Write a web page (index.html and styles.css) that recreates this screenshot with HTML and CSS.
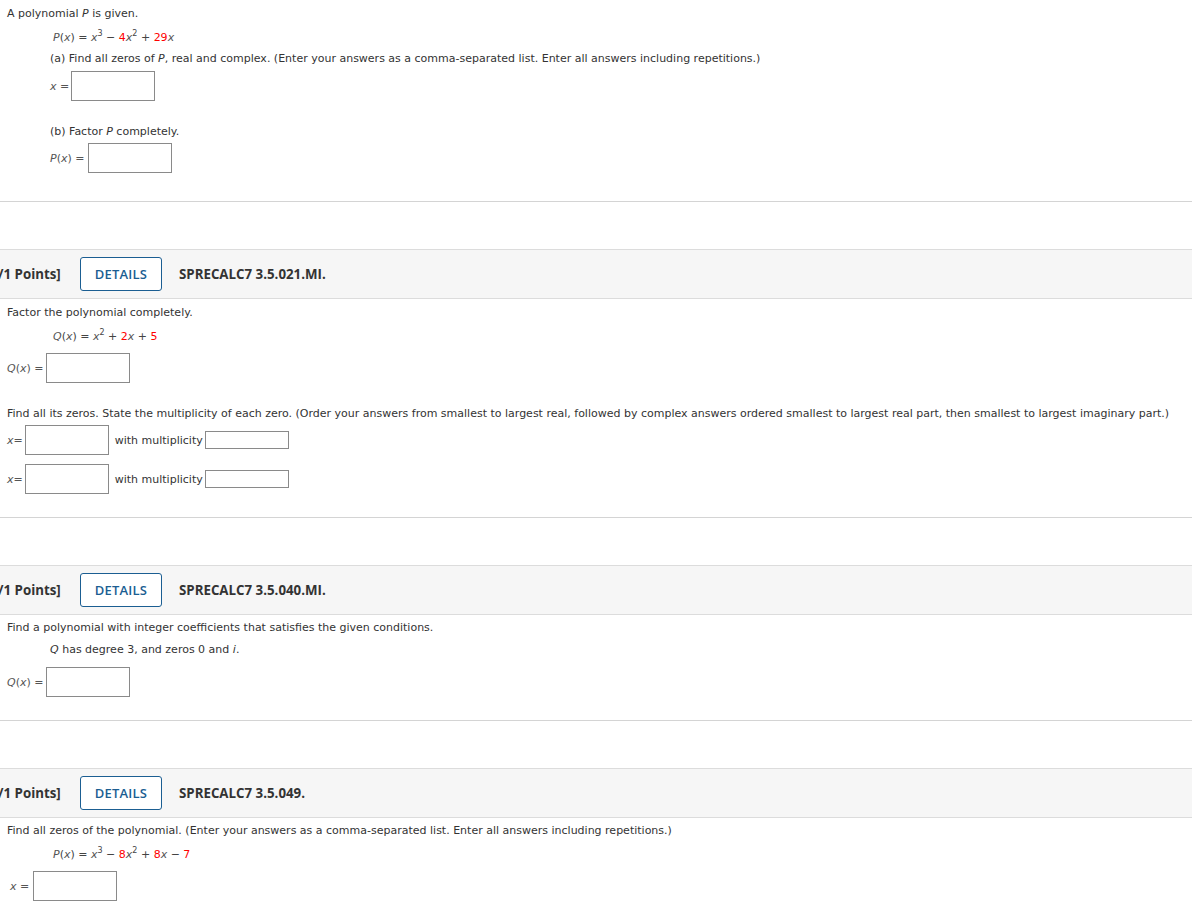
FILE: index.html
```html
<!DOCTYPE html>
<html>
<head>
<meta charset="utf-8">
<link rel="stylesheet" href="styles.css">
</head>
<body>
<div class="q q1">
  <p class="txt t1">A polynomial <i>P</i> is given.</p>
  <div class="indent">
    <p class="math m1"><span class="var">P</span>(<span class="var">x</span>) = <span class="var">x</span><sup>3</sup> &minus; <span class="red">4</span><span class="var">x</span><sup>2</sup> + <span class="red">29</span><span class="var">x</span></p>
    <p class="txt ta">(a) Find all zeros of <i>P</i>, real and complex. (Enter your answers as a comma-separated list. Enter all answers including repetitions.)</p>
    <div class="row ra"><span class="lbl"><span class="var">x</span> =</span><span class="box"></span></div>
    <p class="txt tb">(b) Factor <i>P</i> completely.</p>
    <div class="row rb"><span class="lbl"><span class="var">P</span>(<span class="var">x</span>) =</span><span class="box"></span></div>
  </div>
</div>

<div class="bar">
  <span class="pts">/1 Points]</span>
  <span class="btn">DETAILS</span>
  <span class="code">SPRECALC7 3.5.021.MI.</span>
</div>
<div class="q q2">
  <p class="txt s1">Factor the polynomial completely.</p>
  <p class="math m2"><span class="var">Q</span>(<span class="var">x</span>) = <span class="var">x</span><sup>2</sup> + <span class="red">2</span><span class="var">x</span> + <span class="red">5</span></p>
  <div class="row r2"><span class="lbl"><span class="var">Q</span>(<span class="var">x</span>) =</span><span class="box"></span></div>
  <p class="txt s2">Find all its zeros. State the multiplicity of each zero. (Order your answers from smallest to largest real, followed by complex answers ordered smallest to largest real part, then smallest to largest imaginary part.)</p>
  <div class="row mrow mr1"><span class="lbl"><span class="var">x</span>=</span><span class="box"></span><span class="with">with multiplicity</span><span class="sbox"></span></div>
  <div class="row mrow mr2"><span class="lbl"><span class="var">x</span>=</span><span class="box"></span><span class="with">with multiplicity</span><span class="sbox"></span></div>
</div>

<div class="bar">
  <span class="pts">/1 Points]</span>
  <span class="btn">DETAILS</span>
  <span class="code">SPRECALC7 3.5.040.MI.</span>
</div>
<div class="q q3">
  <p class="txt s1">Find a polynomial with integer coefficients that satisfies the given conditions.</p>
  <p class="txt cond"><i>Q</i> has degree 3, and zeros 0 and <i>i</i>.</p>
  <div class="row r3"><span class="lbl"><span class="var">Q</span>(<span class="var">x</span>) =</span><span class="box"></span></div>
</div>

<div class="bar">
  <span class="pts">/1 Points]</span>
  <span class="btn">DETAILS</span>
  <span class="code">SPRECALC7 3.5.049.</span>
</div>
<div class="q q4">
  <p class="txt s1">Find all zeros of the polynomial. (Enter your answers as a comma-separated list. Enter all answers including repetitions.)</p>
  <p class="math m4"><span class="var">P</span>(<span class="var">x</span>) = <span class="var">x</span><sup>3</sup> &minus; <span class="red">8</span><span class="var">x</span><sup>2</sup> + <span class="red">8</span><span class="var">x</span> &minus; <span class="red">7</span></p>
  <div class="row r4"><span class="lbl"><span class="var">x</span> =</span><span class="box"></span></div>
</div>
</body>
</html>
```

FILE: styles.css
```css
html, body {
  margin: 0;
  padding: 0;
  background: #fff;
  overflow: hidden;
}
body {
  font-family: "DejaVu Sans", Verdana, sans-serif;
  font-size: 11px;
  color: #333;
  width: 1192px;
  height: 902px;
}
p {
  margin: 0;
  line-height: 14px;
}
.q {
  padding-left: 7px;
  border-bottom: 1px solid #d4d4d4;
}
.indent {
  padding-left: 43px;
}
.txt i {
  font-style: italic;
}
.math {
  color: #444;
  padding-left: 46px;
}
.indent .math {
  padding-left: 3px;
}
.var {
  font-style: italic;
  color: #555;
}
.red {
  color: #f00;
}
sup {
  font-size: 8px;
  line-height: 0;
  vertical-align: 5px;
}
.row {
  display: flex;
  align-items: center;
}
.lbl {
  color: #555;
  margin-right: 2px;
}
.box {
  width: 82px;
  height: 28px;
  border: 1px solid #8a8a8a;
  background: #fff;
}
.sbox {
  width: 82px;
  height: 16px;
  border: 1px solid #8a8a8a;
  background: #fff;
}
.with {
  margin: 0 2px 0 6px;
}

/* section 1 */
.q1 { padding-top: 7px; height: 194px; }
.m1 { margin-top: 10px; }
.ta { margin-top: 7px; }
.ra { margin-top: 5px; }
.tb { margin-top: 24px; }
.rb { margin-top: 4px; }
.rb .lbl { margin-right: 4px; }

/* header bar */
.bar {
  margin-top: 47px;
  height: 48px;
  background: #f6f6f6;
  border-top: 1px solid #dcdcdc;
  border-bottom: 1px solid #dcdcdc;
  display: flex;
  align-items: center;
  font-family: "Open Sans", sans-serif;
  font-size: 13.3px;
}
.pts {
  font-weight: 700;
  color: #333;
  margin-left: -2px;
  width: 82px;
}
.btn {
  box-sizing: border-box;
  width: 82px;
  height: 34px;
  border: 1px solid #1b5e92;
  border-radius: 3px;
  background: #fff;
  color: #1b5e92;
  display: flex;
  align-items: center;
  justify-content: center;
  font-weight: 600;
  font-size: 13px;
  letter-spacing: 0.2px;
}
.code {
  margin-left: 17px;
  font-weight: 700;
  color: #333;
}

/* section 2 */
.q2 { padding-top: 7px; height: 211px; }
.m2 { margin-top: 10px; }
.r2 { margin-top: 9px; }
.s2 { margin-top: 24px; }
.mrow .lbl { margin-right: 2px; }
.mr1 { margin-top: 4px; }
.mr2 { margin-top: 9px; }

/* section 3 */
.q3 { padding-top: 6px; height: 99px; }
.cond { margin-top: 8px; padding-left: 43px; }
.r3 { margin-top: 10px; }

/* section 4 */
.q4 { padding-top: 6px; border-bottom: none; }
.m4 { margin-top: 10px; }
.r4 { margin-top: 9px; padding-left: 3px; }
.r4 .lbl { margin-right: 4px; }
```
